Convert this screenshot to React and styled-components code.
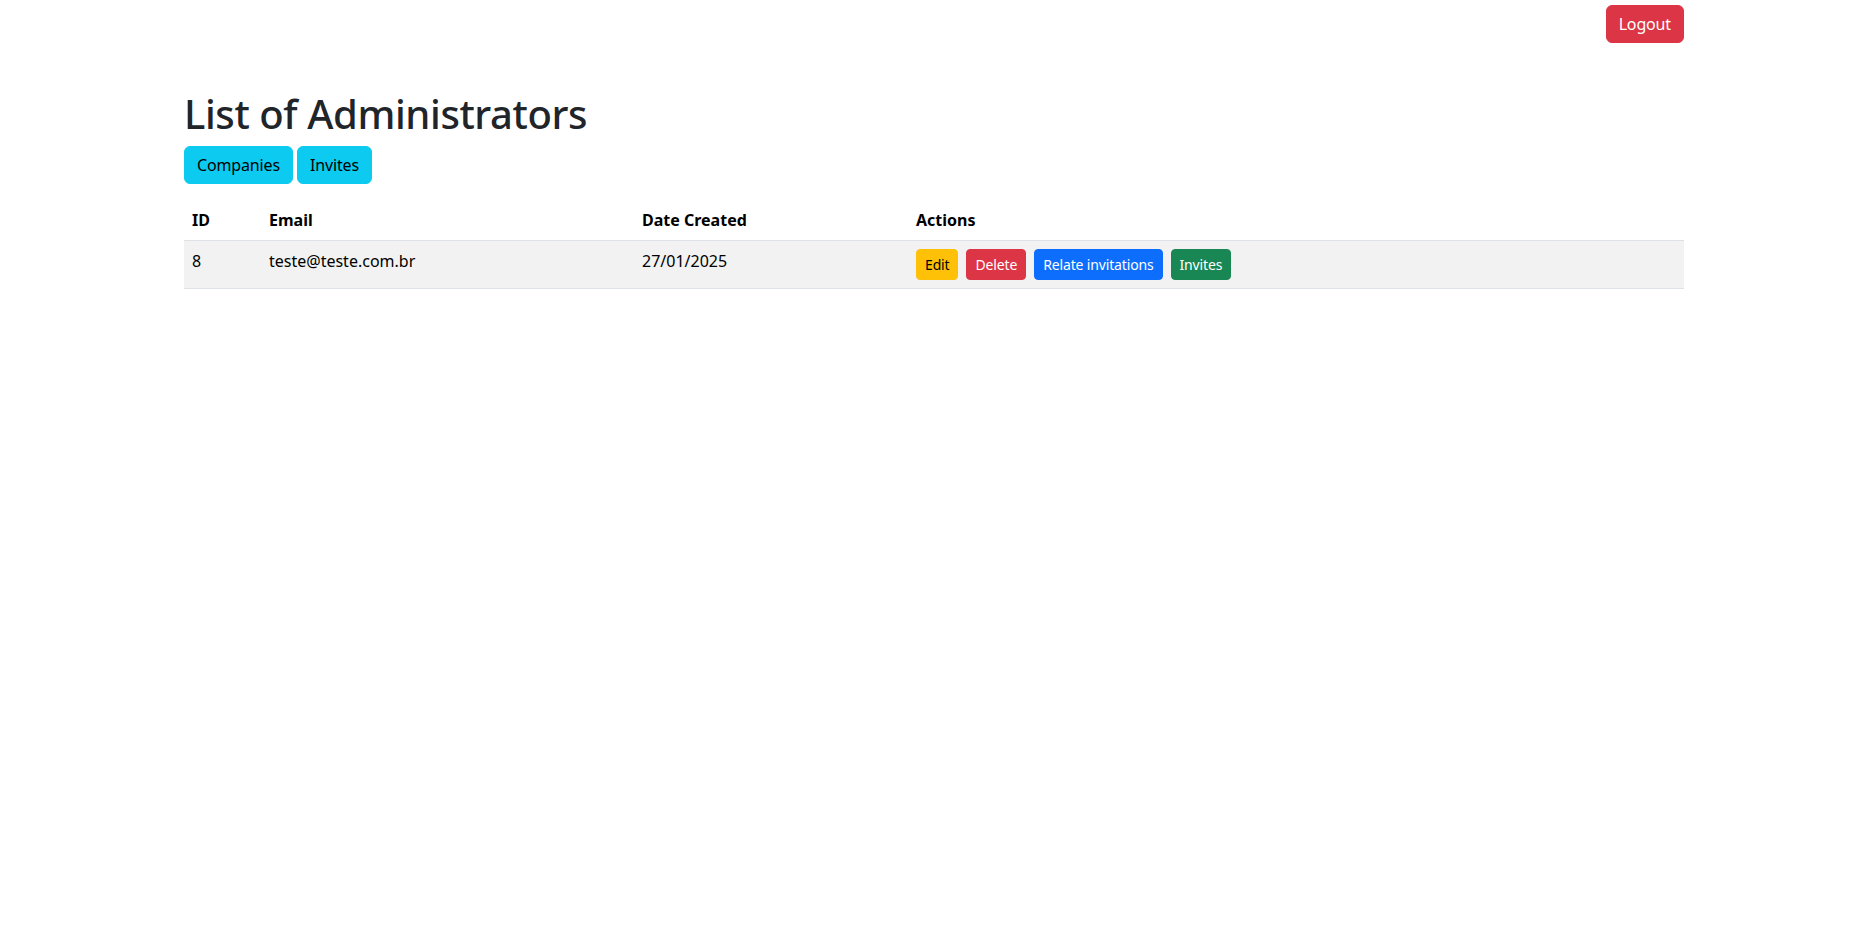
import React from 'react';
import styled, { createGlobalStyle } from 'styled-components';

const GlobalStyle = createGlobalStyle`
  *, *::before, *::after {
    box-sizing: border-box;
  }

  body {
    margin: 0;
    font-family: "Noto Sans", "Open Sans", sans-serif;
    font-size: 16px;
    line-height: 1.5;
    color: #212529;
    background-color: #fff;
  }
`;

const admins = [
  { id: 8, email: 'teste@teste.com.br', created: '27/01/2025' },
];

const columns = [
  { label: 'ID', width: 77 },
  { label: 'Email', width: 373 },
  { label: 'Date Created', width: 274 },
  { label: 'Actions', width: null },
];

const App = () => {
  return (
    <>
      <GlobalStyle />
      <Page>
        <TopBar>
          <Button variant="danger">Logout</Button>
        </TopBar>

        <Content>
          <Title>List of Administrators</Title>
          <NavButtons>
            <Button variant="info">Companies</Button>
            <Button variant="info">Invites</Button>
          </NavButtons>

          <Table>
            <thead>
              <tr>
                {columns.map((col) => (
                  <HeadCell key={col.label} $width={col.width}>
                    {col.label}
                  </HeadCell>
                ))}
              </tr>
            </thead>
            <tbody>
              {admins.map((admin) => (
                <Row key={admin.id}>
                  <Cell>{admin.id}</Cell>
                  <Cell>{admin.email}</Cell>
                  <Cell>{admin.created}</Cell>
                  <Cell>
                    <Actions>
                      <SmallButton variant="warning">Edit</SmallButton>
                      <SmallButton variant="danger">Delete</SmallButton>
                      <SmallButton variant="primary">Relate invitations</SmallButton>
                      <SmallButton variant="success">Invites</SmallButton>
                    </Actions>
                  </Cell>
                </Row>
              ))}
            </tbody>
          </Table>
        </Content>
      </Page>
    </>
  );
};

const variants = {
  danger: { bg: '#dc3545', color: '#fff' },
  info: { bg: '#0dcaf0', color: '#000' },
  warning: { bg: '#ffc107', color: '#000' },
  primary: { bg: '#0d6efd', color: '#fff' },
  success: { bg: '#198754', color: '#fff' },
};

const Page = styled.div`
  width: 1500px;
  margin-left: 184px;
`;

const TopBar = styled.header`
  display: flex;
  justify-content: flex-end;
  padding-top: 5px;
`;

const Content = styled.main`
  padding-top: 47px;
`;

const Title = styled.h1`
  margin: 0 0 8px;
  font-size: 40px;
  font-weight: 500;
  line-height: 1.2;
  letter-spacing: -0.4px;
  color: #212529;
`;

const NavButtons = styled.div`
  display: flex;
  gap: 4px;
  margin-bottom: 16px;
`;

const Button = styled.button`
  display: inline-block;
  padding: 6px 12px;
  font-family: inherit;
  font-size: 16px;
  line-height: 1.5;
  font-weight: 400;
  letter-spacing: -0.15px;
  color: ${(p) => variants[p.variant].color};
  background-color: ${(p) => variants[p.variant].bg};
  border: 1px solid ${(p) => variants[p.variant].bg};
  border-radius: 6px;
  cursor: pointer;
`;

const SmallButton = styled(Button)`
  padding: 4px 8px;
  font-size: 14px;
  border-radius: 4px;
`;

const Table = styled.table`
  width: 100%;
  border-collapse: collapse;
  color: #000;
`;

const HeadCell = styled.th`
  width: ${(p) => (p.$width ? `${p.$width}px` : 'auto')};
  padding: 8px;
  text-align: left;
  vertical-align: top;
  font-weight: 700;
  border-bottom: 1px solid #dee2e6;
`;

const Row = styled.tr`
  background-color: #f2f2f2;
`;

const Cell = styled.td`
  padding: 8px;
  vertical-align: top;
  border-bottom: 1px solid #dee2e6;
`;

const Actions = styled.div`
  display: flex;
  gap: 8px;
`;

export default App;
